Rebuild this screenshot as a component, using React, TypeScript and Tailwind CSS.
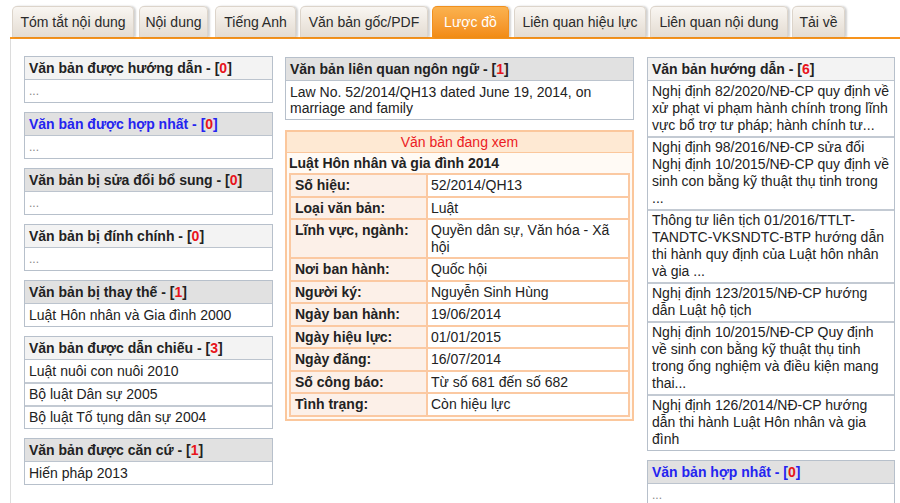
import React from "react";

const Count = ({ n }: { n: number }) => (
  <span>
    [<span className="text-[#e8141b]">{n}</span>]
  </span>
);

type BoxProps = {
  title: string;
  n: number;
  items: string[];
  light?: boolean;
  blue?: boolean;
  multi?: boolean;
};

const Box = ({ title, n, items, light, blue, multi }: BoxProps) => (
  <div className="border border-[#b7c0cb] bg-white">
    <div
      className={`h-[23px] leading-[22px] px-[4px] font-bold border-b border-[#bcc4ce] ${
        light ? "bg-[#f3f3f3]" : "bg-[#e1e1e1]"
      } ${blue ? "text-[#2424f0]" : "text-[#222]"}`}
    >
      {title} - <Count n={n} />
    </div>
    {items.map((it, i) => (
      <div
        key={i}
        className={`px-[4px] ${multi ? "leading-[17px]" : "leading-[18px]"} ${
          i > 0 ? "border-t-2 border-[#c3cad3] pt-[1px] pb-[2px]" : "py-[2px]"
        } ${it === "..." ? "text-[#888] text-[12px]" : "text-[#222]"}`}
      >
        {it}
      </div>
    ))}
  </div>
);

const tabs = [
  { t: "Tóm tắt nội dung", w: "w-[122px] ml-[12px]" },
  { t: "Nội dung", w: "w-[69px] ml-[5px]" },
  { t: "Tiếng Anh", w: "w-[81px] ml-[7px]" },
  { t: "Văn bản gốc/PDF", w: "w-[128px] ml-[4px]" },
  { t: "Lược đồ", w: "w-[77px] ml-[4px]", active: true },
  { t: "Liên quan hiệu lực", w: "w-[132px] ml-[5px]" },
  { t: "Liên quan nội dung", w: "w-[138px] ml-[4px]" },
  { t: "Tải về", w: "w-[53px] ml-[4px]" },
];

const rows: [string, string][] = [
  ["Số hiệu:", "52/2014/QH13"],
  ["Loại văn bản:", "Luật"],
  ["Lĩnh vực, ngành:", "Quyền dân sự, Văn hóa - Xã hội"],
  ["Nơi ban hành:", "Quốc hội"],
  ["Người ký:", "Nguyễn Sinh Hùng"],
  ["Ngày ban hành:", "19/06/2014"],
  ["Ngày hiệu lực:", "01/01/2015"],
  ["Ngày đăng:", "16/07/2014"],
  ["Số công báo:", "Từ số 681 đến số 682"],
  ["Tình trạng:", "Còn hiệu lực"],
];

export default function App() {
  return (
    <div className="w-[900px] h-[503px] overflow-hidden bg-white text-[14px] text-[#222] font-['Liberation_Sans',Arial,sans-serif]">
      <div className="flex items-end h-[37px]">
        {tabs.map((tab) => (
          <div
            key={tab.t}
            className={`${tab.w} h-[31px] rounded-t-[5px] flex items-center justify-center border border-b-0 shadow-[2px_0_2px_rgba(0,0,0,0.18)] ${
              tab.active
                ? "bg-gradient-to-b from-[#fbb24e] to-[#f28c14] border-[#f0901e] text-white"
                : "bg-gradient-to-b from-[#f9f6f2] to-[#e4dcd2] border-[#dcd4ca] text-[#2a2a2a]"
            }`}
          >
            {tab.t}
          </div>
        ))}
      </div>
      <div className="ml-[10px] h-[2px] bg-[#f7941d]" />
      <div className="ml-[10px] h-[464px] border-l border-[#dcdcdc] flex items-start pl-[13px] pt-[17px]">
        {/* Left column */}
        <div className="w-[249px] flex flex-col gap-[9px]">
          <Box title="Văn bản được hướng dẫn" n={0} items={["..."]} light />
          <Box title="Văn bản được hợp nhất" n={0} items={["..."]} blue />
          <Box title="Văn bản bị sửa đổi bổ sung" n={0} items={["..."]} />
          <Box title="Văn bản bị đính chính" n={0} items={["..."]} light />
          <Box
            title="Văn bản bị thay thế"
            n={1}
            items={["Luật Hôn nhân và Gia đình 2000"]}
          />
          <Box
            title="Văn bản được dẫn chiếu"
            n={3}
            items={[
              "Luật nuôi con nuôi 2010",
              "Bộ luật Dân sự 2005",
              "Bộ luật Tố tụng dân sự 2004",
            ]}
            light
          />
          <Box title="Văn bản được căn cứ" n={1} items={["Hiến pháp 2013"]} />
        </div>

        {/* Middle column */}
        <div className="w-[349px] ml-[12px] flex flex-col gap-[10px] pt-[1px]">
          <div className="border border-[#b7c0cb] bg-white">
            <div className="h-[23px] leading-[22px] px-[4px] font-bold bg-[#e1e1e1] border-b border-[#bcc4ce]">
              Văn bản liên quan ngôn ngữ - <Count n={1} />
            </div>
            <div className="px-[4px] pt-[3px] pb-[3px] leading-[16px]">
              Law No. 52/2014/QH13 dated June 19, 2014, on marriage and family
            </div>
          </div>

          <div className="border-2 border-[#fbc79c] bg-[#fffaf5] pb-[2px]">
            <div className="h-[21px] leading-[20px] text-center text-[#ec1c24] bg-[#fee9d3] border-b border-[#fbc79c]">
              Văn bản đang xem
            </div>
            <div className="px-[2px] h-[20px] leading-[21px] font-bold">
              Luật Hôn nhân và gia đình 2014
            </div>
            <div className="mx-[2px] border-2 border-[#fbc9a2]">
              {rows.map(([k, v], i) => (
                <div
                  key={k}
                  className={`flex ${i > 0 ? "border-t-2 border-[#fbc9a2]" : ""}`}
                >
                  <div className="w-[137px] shrink-0 bg-[#fcf0e8] px-[4px] py-[2px] leading-[16.5px] font-bold border-r-2 border-[#fbc9a2]">
                    {k}
                  </div>
                  <div className="flex-1 bg-white px-[3px] py-[2px] leading-[16.5px]">
                    {v}
                  </div>
                </div>
              ))}
            </div>
          </div>
        </div>

        {/* Right column */}
        <div className="w-[248px] ml-[13px] flex flex-col gap-[9px] pt-[1px]">
          <Box
            title="Văn bản hướng dẫn"
            n={6}
            light
            multi
            items={[
              "Nghị định 82/2020/NĐ-CP quy định về xử phạt vi phạm hành chính trong lĩnh vực bổ trợ tư pháp; hành chính tư...",
              "Nghị định 98/2016/NĐ-CP sửa đổi Nghị định 10/2015/NĐ-CP quy định về sinh con bằng kỹ thuật thụ tinh trong ...",
              "Thông tư liên tịch 01/2016/TTLT-TANDTC-VKSNDTC-BTP hướng dẫn thi hành quy định của Luật hôn nhân và gia ...",
              "Nghị định 123/2015/NĐ-CP hướng dẫn Luật hộ tịch",
              "Nghị định 10/2015/NĐ-CP Quy định về sinh con bằng kỹ thuật thụ tinh trong ống nghiệm và điều kiện mang thai...",
              "Nghị định 126/2014/NĐ-CP hướng dẫn thi hành Luật Hôn nhân và gia đình",
            ]}
          />
          <Box title="Văn bản hợp nhất" n={0} items={["..."]} blue />
        </div>
      </div>
    </div>
  );
}
